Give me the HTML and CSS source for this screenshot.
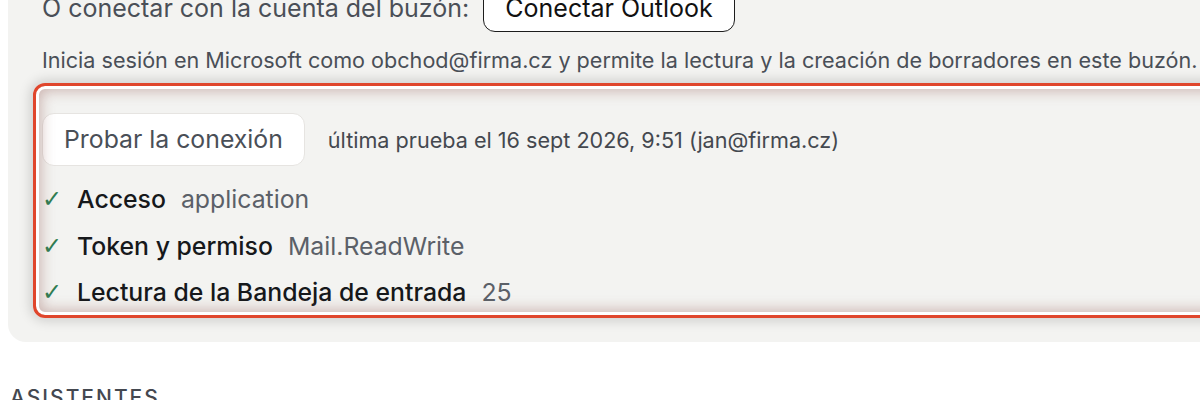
FILE: index.html
```html
<!DOCTYPE html>
<html lang="es">
<head>
<meta charset="utf-8">
<title>Buzón</title>
<link rel="stylesheet" href="styles.css">
</head>
<body>
<div class="page">
  <section class="panel">
    <div class="connect-row">
      <span class="connect-text">O conectar con la cuenta del buzón:</span>
      <button class="btn-outlook">Conectar Outlook</button>
    </div>
    <p class="hint">Inicia sesión en Microsoft como obchod@firma.cz y permite la lectura y la creación de borradores en este buzón.</p>
    <div class="checks">
      <div class="test-row">
        <button class="btn-test">Probar la conexión</button>
        <span class="last-test">última prueba el 16 sept 2026, 9:51 (jan@firma.cz)</span>
      </div>
      <ul class="check-list">
        <li class="check"><span class="tick">✓</span><span class="label">Acceso</span><span class="value">application</span></li>
        <li class="check"><span class="tick">✓</span><span class="label">Token y permiso</span><span class="value">Mail.ReadWrite</span></li>
        <li class="check"><span class="tick">✓</span><span class="label">Lectura de la Bandeja de entrada</span><span class="value">25</span></li>
      </ul>
    </div>
  </section>
  <h2 class="section-title">Asistentes</h2>
</div>
</body>
</html>
```
FILE: styles.css
```css
html, body {
  margin: 0;
  padding: 0;
  background: #ffffff;
  overflow: hidden;
}
body {
  font-family: "Inter", "Noto Sans", sans-serif;
  color: #4a4f57;
}
.page {
  width: 1280px;
  margin-top: -16px;
  padding-left: 8px;
}
.panel {
  background: #f3f3f1;
  border-radius: 0 0 0 18px;
  padding: 0 34px 34px 34px;
}
.connect-row {
  display: flex;
  align-items: center;
  gap: 14px;
}
.connect-text {
  font-size: 25px;
  color: #4a4f57;
}
.btn-outlook {
  font-family: inherit;
  font-size: 25px;
  color: #111;
  background: #fff;
  border: 1.5px solid #1d1d1d;
  border-radius: 12px;
  padding: 8px 21px;
  line-height: 30px;
}
.hint {
  margin: 14px 0 0 0;
  font-size: 21.6px;
  line-height: 28px;
  color: #4a4f57;
  white-space: nowrap;
}
.checks {
  position: relative;
  margin-top: 39px;
}
.checks::after {
  content: "";
  position: absolute;
  top: -30px;
  left: -9px;
  right: -60px;
  bottom: -10px;
  border: 3.5px solid #e0462c;
  border-radius: 12px;
  box-shadow:
    inset 0 0 0 3px #ffffff,
    inset 0 0 14px 5px rgba(150, 95, 88, 0.42),
    0 0 12px 3px rgba(0, 0, 0, 0.15);
  pointer-events: none;
}
.test-row {
  display: flex;
  align-items: center;
  gap: 23px;
}
.btn-test {
  font-family: inherit;
  font-size: 24.8px;
  color: #4a4f57;
  background: #ffffff;
  border: 1px solid #e6e4e1;
  border-radius: 12px;
  padding: 10px 21px;
  line-height: 31px;
}
.last-test {
  font-size: 21.6px;
  color: #44484f;
}
.check-list {
  list-style: none;
  margin: 17px 0 0 0;
  padding: 0;
  display: flex;
  flex-direction: column;
  gap: 14.5px;
}
.check {
  display: flex;
  align-items: center;
  height: 32px;
  line-height: 32px;
  font-size: 24.8px;
}
.tick {
  width: 35px;
  color: #2f7d52;
  font-size: 24px;
  line-height: 32px;
  font-family: "DejaVu Sans", sans-serif;
}
.label {
  font-weight: 500;
  color: #16181b;
  margin-right: 15px;
}
.value {
  color: #5b6068;
}
.section-title {
  margin: 43px 0 0 2px;
  font-size: 21px;
  font-weight: 500;
  letter-spacing: 2px;
  text-transform: uppercase;
  color: #444850;
}
```
